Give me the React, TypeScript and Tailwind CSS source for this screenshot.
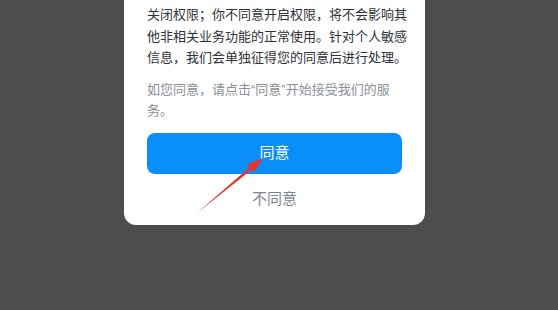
import React from 'react';

const font = "font-['Liberation_Sans','Noto_Sans_CJK_SC',sans-serif]";

const Arrow: React.FC = () => (
  <svg className="absolute left-0 top-0 pointer-events-none" width="558" height="310" viewBox="0 0 558 310">
    <polygon
      points="197,213 249.8,167.1 247.4,164.3 263,158 254.2,172.3 251.8,169.4"
      fill="#e8322b"
    />
  </svg>
);

export default function App() {
  return (
    <div className={`relative w-[558px] h-[310px] bg-[#4d4d4d] overflow-hidden ${font}`}>
      <div className="ml-[124px] w-[301px] bg-white rounded-b-[12px] pl-[23px] pr-[23px] pt-[4px] pb-[12px]">
        <p className="w-[262px] text-[13px] leading-[21.5px] text-[#2f3237]">
          关闭权限；你不同意开启权限，将不会影响其他非相关业务功能的正常使用。针对个人敏感信息，我们会单独征得您的同意后进行处理。
        </p>
        <p className="w-[262px] mt-[10px] text-[13px] leading-[21px] text-[#8b8f97]">
          如您同意，请点击“同意”开始接受我们的服务。
        </p>
        <button className="mt-[12px] w-[255px] h-[41px] rounded-[8px] bg-[#0a8ffa] text-white text-[15px] flex items-center justify-center">
          同意
        </button>
        <div className="mt-[12px] h-[27px] flex items-center justify-center w-[255px] text-[15px] text-[#80868f]">
          不同意
        </div>
      </div>
      <Arrow />
    </div>
  );
}
